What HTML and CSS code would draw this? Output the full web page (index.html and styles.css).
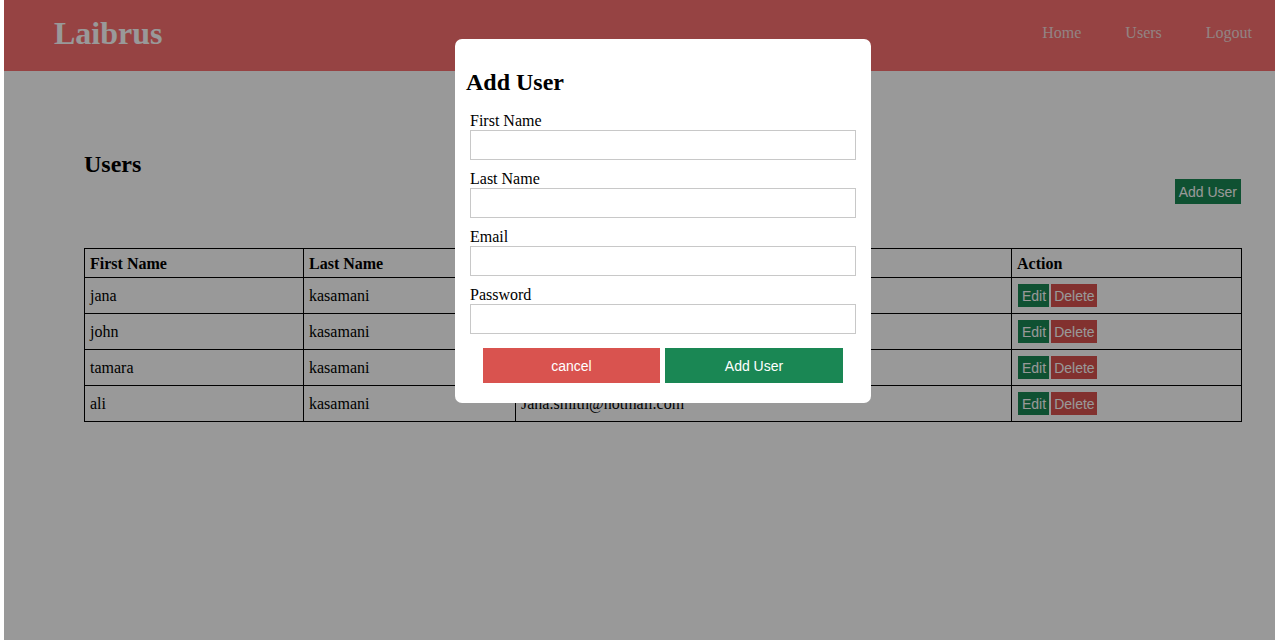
FILE: index.html
```html
<!DOCTYPE html>
<html lang="en">
<head>
<meta charset="utf-8">
<title>Laibrus - Users</title>
<link rel="stylesheet" href="styles.css">
</head>
<body>
<div class="page">
  <header class="topbar">
    <div class="logo">Laibrus</div>
    <nav class="nav">
      <a href="#">Home</a>
      <a href="#">Users</a>
      <a href="#">Logout</a>
    </nav>
  </header>
  <main class="content">
    <div class="toolbar">
      <h2 class="title">Users</h2>
      <button class="btn btn-green btn-add">Add User</button>
    </div>
    <table class="users">
      <colgroup>
        <col class="c1"><col class="c2"><col class="c3"><col class="c4">
      </colgroup>
      <thead>
        <tr><th>First Name</th><th>Last Name</th><th>Email</th><th>Action</th></tr>
      </thead>
      <tbody>
        <tr><td>jana</td><td>kasamani</td><td>Jana.smith@hotmail.com</td><td><div class="actions"><button class="btn btn-green btn-edit">Edit</button><button class="btn btn-red btn-del">Delete</button></div></td></tr>
        <tr><td>john</td><td>kasamani</td><td>Jana.smith@hotmail.com</td><td><div class="actions"><button class="btn btn-green btn-edit">Edit</button><button class="btn btn-red btn-del">Delete</button></div></td></tr>
        <tr><td>tamara</td><td>kasamani</td><td>Jana.smith@hotmail.com</td><td><div class="actions"><button class="btn btn-green btn-edit">Edit</button><button class="btn btn-red btn-del">Delete</button></div></td></tr>
        <tr><td>ali</td><td>kasamani</td><td>Jana.smith@hotmail.com</td><td><div class="actions"><button class="btn btn-green btn-edit">Edit</button><button class="btn btn-red btn-del">Delete</button></div></td></tr>
      </tbody>
    </table>
  </main>
</div>
<div class="overlay">
  <div class="modal">
    <h2 class="modal-title">Add User</h2>
    <form class="form">
      <label class="field"><span>First Name</span><input type="text"></label>
      <label class="field"><span>Last Name</span><input type="text"></label>
      <label class="field"><span>Email</span><input type="email"></label>
      <label class="field"><span>Password</span><input type="password"></label>
      <div class="modal-actions">
        <button type="button" class="mbtn mbtn-cancel">cancel</button>
        <button type="button" class="mbtn mbtn-ok">Add User</button>
      </div>
    </form>
  </div>
</div>
</body>
</html>
```
FILE: styles.css
```css
* { box-sizing: border-box; }
html, body { margin: 0; padding: 0; }
body {
  font-family: "Liberation Serif", "Times New Roman", serif;
  font-size: 16px;
  color: #000;
  background: #fff;
  height: 640px;
  overflow: hidden;
}
.page {
  margin-left: 4px;
  height: 640px;
  background: #fff;
}
.topbar {
  height: 71px;
  background: #fa7171;
  display: flex;
  align-items: center;
  justify-content: space-between;
  padding: 0 23px 0 50px;
}
.logo {
  font-weight: bold;
  font-size: 32px;
  color: #fff;
  margin-top: -4px;
}
.nav {
  display: flex;
  gap: 44px;
  margin-top: -5px;
}
.nav a {
  color: #f4dada;
  text-decoration: none;
  font-size: 16px;
}
.content {
  padding: 80px 33px 0 80px;
}
.toolbar {
  display: flex;
  justify-content: space-between;
  align-items: flex-start;
}
.title {
  margin: 0;
  font-size: 24px;
  font-weight: bold;
  line-height: 27px;
}
.btn {
  border: none;
  color: #fff;
  font-family: "Liberation Sans", Arial, sans-serif;
  font-size: 14px;
  height: 23px;
  padding: 0 3px;
  cursor: pointer;
}
.btn-green { background: #1a8754; }
.btn-red { background: #d9534f; }
.btn-edit { padding: 0 3px 0 4px; }
.btn-del { padding: 0 2px 0 3px; }
.btn-add {
  margin-top: 28px;
  margin-right: 1px;
  height: 25px;
  padding: 0 4px;
}
.users {
  margin-top: 44px;
  width: 1158px;
  border-collapse: collapse;
  table-layout: fixed;
}
.c1 { width: 219px; }
.c2 { width: 212px; }
.c3 { width: 496px; }
.c4 { width: 230px; }
.users th, .users td {
  border: 1px solid #000;
  text-align: left;
  padding: 5px 5px;
  vertical-align: middle;
}
.users th {
  height: 29px;
  line-height: 17px;
  padding: 5px 5px 4px;
}
.users td {
  height: 36px;
  line-height: 18px;
}
.actions {
  display: flex;
  gap: 2px;
  padding-left: 1px;
}
.overlay {
  position: fixed;
  top: 0;
  left: 4px;
  right: 0;
  bottom: 0;
  background: rgba(0, 0, 0, 0.4);
}
.modal {
  position: absolute;
  left: 451px;
  top: 39px;
  width: 416px;
  height: 364px;
  background: #fff;
  border-radius: 7px;
  padding: 0 11px;
}
.modal-title {
  margin: 30px 0 16px;
  font-size: 24px;
  line-height: 27px;
}
.form {
  padding: 0 4px;
}
.field {
  display: block;
  margin-bottom: 10px;
}
.field span {
  display: block;
  line-height: 18px;
}
.field input {
  display: block;
  width: 100%;
  height: 30px;
  border: 1px solid #c8c8c8;
  padding: 0 6px;
  font-size: 16px;
  margin: 0;
}
.modal-actions {
  display: flex;
  justify-content: center;
  gap: 5px;
  margin-top: 14px;
}
.mbtn {
  border: none;
  height: 35px;
  color: #fff;
  font-family: "Liberation Sans", Arial, sans-serif;
  font-size: 14px;
  cursor: pointer;
}
.mbtn-cancel { width: 177px; background: #d9534f; }
.mbtn-ok { width: 178px; background: #1a8754; }
```
